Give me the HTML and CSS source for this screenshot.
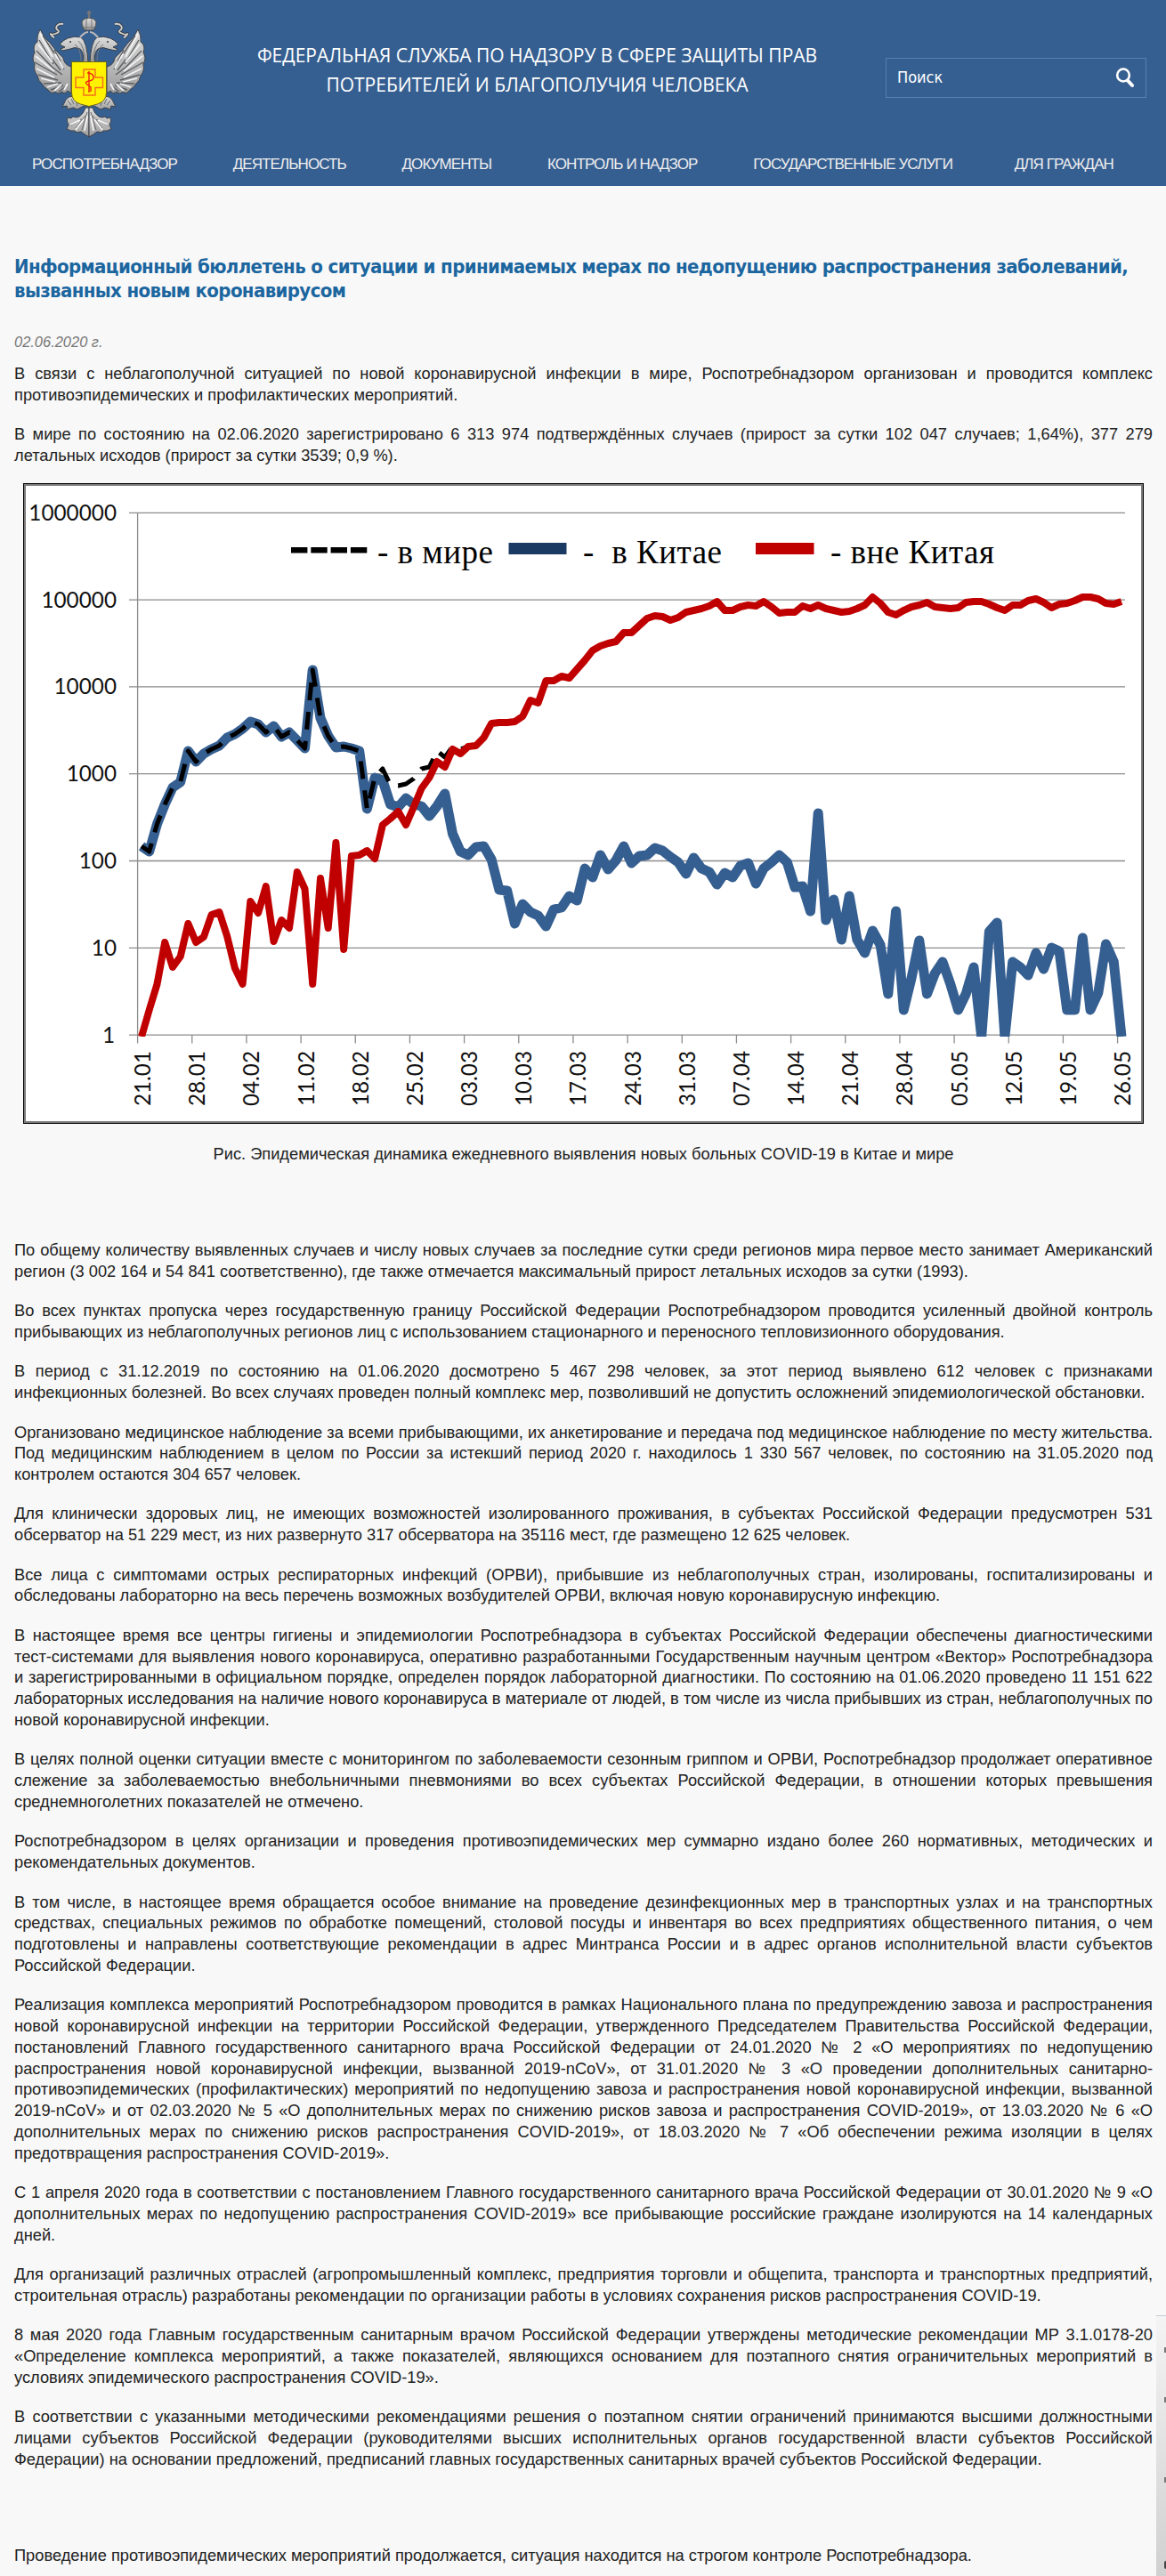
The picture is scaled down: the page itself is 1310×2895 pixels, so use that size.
FILE: index.html
```html
<!DOCTYPE html>
<html lang="ru">
<head>
  <meta charset="UTF-8">
  <meta name="viewport" content="width=device-width, initial-scale=1.0">
  <title>Информационный бюллетень</title>
  <link rel="stylesheet" href="styles.css">
</head>
<body>
  <header class="header">
    <div class="header-top">
      <a class="logo" href="#">
        <svg width="132" height="146" viewBox="34 10 132 146">
          <defs>
            <linearGradient id="silver" x1="0" y1="0" x2="0" y2="1">
              <stop offset="0" stop-color="#dedede"/>
              <stop offset="1" stop-color="#9c9c9c"/>
            </linearGradient>
            <!-- left half of the eagle, mirrored for the right one -->
            <g id="half" stroke="#3b3f45" stroke-width="1" stroke-linejoin="round">
              <path fill="none" stroke-width="3.6" d="M71 27q-5-1-7 2t1 5-3 4-5 0q2 4 4 4"/>
              <path fill="none" stroke="#d0d0d0" stroke-width="1.8" d="M71 27q-5-1-7 2t1 5-3 4-5 0q2 4 4 4"/>
              <path fill="url(#silver)" d="M45 33q-4 7-3 14-6 4-3 12-4 6 0 13-2 7 3 13 1 6 5 9 3 5 7 7 4 6 8 2 4 4 7 0 4 4 7-1l4 3V75q-8-2-9-10-9-8-15-17-7-6-11-15z"/>
              <g fill="none" stroke="#5d6064" stroke-width="1.4">
                <path d="M44 45l16 27M41 57l20 21M39 70l25 14M43 84l22 6M49 94l20-1M57 101l14-5M66 103l8-6M48 40l13 20M52 46l5 8M61 56l7 13M64 66l8 12M59 67l9 12M58 75l12 9"/>
              </g>
              <g fill="none" stroke="#f2f2f2" stroke-width="1.8">
                <path d="M45 38l14 26M43 50l16 20M40 63l21 17M41 77l20 10M46 88l16 4M53 98l12-4M61 102l8-7M72 101l4-7M62 61l9 16"/>
              </g>
              <path fill="url(#silver)" d="M93 70q2-10-3-15-6-3-11 0-4 1-9 2l-2-2 5-2-6-3q4-5 9-7 8-3 15-1 7 5 8 28z"/>
              <path fill="none" stroke="#777" d="M88 46q7 6 7 22M84 50q7 4 7 18"/>
              <circle cx="79" cy="47" r="1" fill="#333" stroke="none"/>
              <path fill="none" stroke="#b9b9b9" stroke-width="2" d="M99 36q-4 0-9 6"/>
              <path fill="url(#silver)" d="M83 108q-6 0-9 4l-4 8 5-1 1 4 6-2 5 2 5-3 5-2-3-6z"/>
              <path fill="none" stroke="#666" d="M76 113l4 5M80 111l3 6M85 111l2 8"/>
              <path fill="url(#silver)" d="M100 121h-4q-2 7-7 10-4 2-7 0l-2 2-4-1q-2 4 1 8l-2 5q5 3 9 2l2 2 5-1 4 3 5 3z"/>
              <path fill="none" stroke="#666" d="M98 126l-6 20M96 130l-11 14M92 134l-13 7"/>
              <path fill="none" stroke="#fafafa" stroke-width="1.5" d="M98 130l-3 17M94 134l-9 12M90 135l-11 5"/>
            </g>
          </defs>
          <use href="#half"/>
          <use href="#half" transform="matrix(-1 0 0 1 200 0)"/>
          <path fill="url(#silver)" stroke="#444" d="M92 24q3-4 8-4t8 4q1 4-3 10H95q-4-6-3-10z"/>
          <path fill="none" stroke="#777" d="M97 21v12M103 21v12M94 31h12"/>
          <path stroke="#777" stroke-width="2.2" d="M100 12v8M97.500 14.500h5"/>
          <path fill="#fff200" stroke="#6c6420" d="M80.500 69.500h39V104q0 10-10 13l-9.500 2.500-9.500-2.500q-10-3-10-13z"/>
          <path fill="none" stroke="#f3701c" stroke-width="1.400" d="M94 78h13v9h8.500v11.500H107V107H94v-8.500h-9V87h9z"/>
          <path fill="none" stroke="#ee2211" stroke-width="1.400" d="M100 80v24M98 82q6 0 7 4t-5 5-2 4 4 3 0 5"/>
        </svg>
      </a>
      <h2 class="site-name">Федеральная служба по надзору в сфере защиты прав<br>потребителей и благополучия человека</h2>
      <form class="search">
        <span class="search-label">Поиск</span>
        <svg class="search-icon" width="22" height="24" viewBox="0 0 22 24">
          <ellipse cx="9" cy="9.500" rx="6.800" ry="7" fill="none" stroke="#fff" stroke-width="2.600"/>
          <path d="M14 15.500l5 5.500" stroke="#fff" stroke-width="4" stroke-linecap="round"/>
        </svg>
      </form>
    </div>
    <nav class="menu">
      <a href="#">Роспотребнадзор</a>
      <a href="#">Деятельность</a>
      <a href="#">Документы</a>
      <a href="#">Контроль и надзор</a>
      <a href="#">Государственные услуги</a>
      <a href="#">Для граждан</a>
    </nav>
  </header>

  <main class="content">
    <h1>Информационный бюллетень о ситуации и принимаемых мерах по недопущению распространения заболеваний, вызванных новым коронавирусом</h1>
    <p class="date">02.06.2020 г.</p>
    <p>В связи с неблагополучной ситуацией по новой коронавирусной инфекции в мире, Роспотребнадзором организован и проводится комплекс противоэпидемических и профилактических мероприятий.</p>
    <p>В мире по состоянию на 02.06.2020 зарегистрировано 6 313 974 подтверждённых случаев (прирост за сутки 102 047 случаев; 1,64%), 377 279 летальных исходов (прирост за сутки 3539; 0,9 %).</p>

    <div class="chart">
      <svg id="chart" width="1259" height="720" viewBox="26 544 1259 720">
        <defs>
          <clipPath id="plot"><rect x="154" y="560" width="1112" height="606"/></clipPath>
        </defs>
        <rect x="26.500" y="544.500" width="1258" height="719" fill="#fff" stroke="#000"/>
        <rect x="28" y="546" width="1255" height="716" fill="none" stroke="#7c7a7b" stroke-width="2"/>
        <g id="grid" class="grid"></g>
        <g id="labels" class="labels"></g>
        <g clip-path="url(#plot)" class="lines">
          <polyline id="china" stroke="#365f91" stroke-width="11"/>
          <polyline id="world" stroke="#000" stroke-width="5" stroke-dasharray="20 13"/>
          <polyline id="outside" stroke="#c00000" stroke-width="8"/>
        </g>
        <g class="legend">
          <path d="M327 619.300h85.500" stroke="#000" stroke-width="6.500" stroke-dasharray="18.400 3.900"/>
          <text x="424" y="634" textLength="130">- в мире</text>
          <rect x="571.500" y="611" width="65" height="13" fill="#1b3a63"/>
          <text x="655" y="634" textLength="156">-&nbsp; в Китае</text>
          <rect x="849" y="611" width="65.500" height="13" fill="#c00000"/>
          <text x="933" y="634" textLength="184">- вне Китая</text>
        </g>
      </svg>
    </div>
    <p class="caption">Рис. Эпидемическая динамика ежедневного выявления новых больных COVID-19 в Китае и мире</p>

    <p class="spaced">По общему количеству выявленных случаев и числу новых случаев за последние сутки среди регионов мира первое место занимает Американский регион (3 002 164 и 54 841 соответственно), где также отмечается максимальный прирост летальных исходов за сутки (1993).</p>
    <p>Во всех пунктах пропуска через государственную границу Российской Федерации Роспотребнадзором проводится усиленный двойной контроль прибывающих из неблагополучных регионов лиц с использованием стационарного и переносного тепловизионного оборудования.</p>
    <p>В период с 31.12.2019 по состоянию на 01.06.2020 досмотрено 5 467 298 человек, за этот период выявлено 612 человек с признаками <span class="nowrap">инфекционных болезней.</span> Во всех случаях проведен полный комплекс мер, позволивший не допустить осложнений эпидемиологической обстановки.</p>
    <p>Организовано медицинское наблюдение за всеми прибывающими, их анкетирование и передача под медицинское наблюдение по месту жительства. Под медицинским наблюдением в целом по России за истекший период 2020 г. находилось 1 330 567 человек, по состоянию на 31.05.2020 под контролем остаются 304 657 человек.</p>
    <p>Для клинически здоровых лиц, не имеющих возможностей изолированного проживания, в субъектах Российской Федерации предусмотрен 531 обсерватор на 51 229 мест, из них развернуто 317 обсерватора на 35116 мест, где размещено 12 625 человек.</p>
    <p>Все лица с симптомами острых респираторных инфекций (ОРВИ), прибывшие из неблагополучных стран, изолированы, госпитализированы и обследованы лабораторно на весь перечень возможных возбудителей ОРВИ, включая новую коронавирусную инфекцию.</p>
    <p>В настоящее время все центры гигиены и эпидемиологии Роспотребнадзора в субъектах Российской Федерации обеспечены диагностическими <span class="nowrap">тест-системами</span> для выявления нового коронавируса, оперативно разработанными Государственным научным центром «Вектор» Роспотребнадзора и зарегистрированными в официальном порядке, определен порядок лабораторной диагностики. По состоянию на 01.06.2020 проведено 11 151 622 лабораторных исследования на наличие нового коронавируса в материале от людей, в том числе из числа прибывших из стран, неблагополучных по новой коронавирусной инфекции.</p>
    <p>В целях полной оценки ситуации вместе с мониторингом по заболеваемости сезонным гриппом и ОРВИ, Роспотребнадзор продолжает оперативное слежение за заболеваемостью внебольничными пневмониями во всех субъектах Российской Федерации, в отношении которых превышения среднемноголетних показателей не отмечено.</p>
    <p>Роспотребнадзором в целях организации и проведения противоэпидемических мер суммарно издано более 260 нормативных, методических и рекомендательных документов.</p>
    <p>В том числе, в настоящее время обращается особое внимание на проведение дезинфекционных мер в транспортных узлах и на транспортных средствах, специальных режимов по обработке помещений, столовой посуды и инвентаря во всех предприятиях общественного питания, о чем подготовлены и направлены соответствующие рекомендации в адрес Минтранса России и в адрес органов исполнительной власти субъектов Российской Федерации.</p>
    <p>Реализация комплекса мероприятий Роспотребнадзором проводится в рамках Национального плана по предупреждению завоза и распространения новой коронавирусной инфекции на территории Российской Федерации, утвержденного Председателем Правительства Российской Федерации, постановлений Главного государственного санитарного врача Российской Федерации от 24.01.2020 № 2 «О мероприятиях по недопущению распространения новой коронавирусной инфекции, вызванной 2019-nCoV», от 31.01.2020 № 3 «О проведении дополнительных санитарно-противоэпидемических (профилактических) мероприятий по недопущению завоза и распространения новой коронавирусной инфекции, вызванной 2019-nCoV» и от 02.03.2020 № 5 «О дополнительных мерах по снижению рисков завоза и распространения COVID-2019», от 13.03.2020 № 6 «О дополнительных мерах по снижению рисков распространения COVID-2019», от 18.03.2020 № 7 «Об обеспечении режима изоляции в целях предотвращения распространения COVID-2019».</p>
    <p>С 1 апреля 2020 года в соответствии с постановлением Главного государственного санитарного врача Российской Федерации от 30.01.2020 № 9 «О дополнительных мерах по недопущению распространения COVID-2019» все прибывающие российские граждане изолируются на 14 календарных дней.</p>
    <p>Для организаций различных отраслей (агропромышленный комплекс, предприятия торговли и общепита, транспорта и транспортных предприятий, строительная отрасль) разработаны рекомендации по организации работы в условиях сохранения рисков распространения COVID-19.</p>
    <p>8 мая 2020 года Главным государственным санитарным врачом Российской Федерации утверждены методические рекомендации МР 3.1.0178-20 «Определение комплекса мероприятий, а также показателей, являющихся основанием для поэтапного снятия ограничительных мероприятий в условиях эпидемического распространения COVID-19».</p>
    <p>В соответствии с указанными методическими рекомендациями решения о поэтапном снятии ограничений принимаются высшими должностными лицами субъектов Российской Федерации (руководителями высших исполнительных органов государственной власти субъектов Российской Федерации) на основании предложений, предписаний главных государственных санитарных врачей субъектов Российской Федерации.</p>
    <p class="spaced">Проведение противоэпидемических мероприятий продолжается, ситуация находится на строгом контроле Роспотребнадзора.</p>
  </main>

  <aside class="side-panel">
    <i></i>
    <i></i>
    <i></i>
    <i class="round"></i>
  </aside>

  <script src="chart.js"></script>
</body>
</html>
```

FILE: styles.css
```css
* {
  box-sizing: border-box;
}

body {
  position: relative;
  margin: 0;
  height: 2895px;
  overflow: hidden;
  background-color: #f8f8f8;
  color: #222;
  font-family: "Liberation Sans", Arial, sans-serif;
  font-size: 18.26px;
  line-height: 23.77px;
}

.header {
  height: 209px;
  background-color: #365f91;
  color: #fff;
}

.header-top {
  display: flex;
  height: 166px;
}

.logo {
  margin: 10px 0 0 34px;
  height: 146px;
}

.site-name {
  flex: 1;
  margin: 46px 0 0;
  padding-left: 46px;
  text-align: center;
  text-transform: uppercase;
  font: 21px/33px "Open Sans", "Noto Sans", sans-serif;
}

.search {
  display: flex;
  justify-content: space-between;
  width: 293px;
  height: 45px;
  margin: 65px 22px 0 0;
  padding: 0 12px;
  border: 1px solid #5580b5;
}

.search-label {
  font: 18px/41px "DejaVu Sans Condensed", "DejaVu Sans", sans-serif;
}

.search-icon {
  margin-top: 9px;
}

.menu {
  display: flex;
  justify-content: space-between;
  padding: 6px 59px 0 36px;
  font-size: 17px;
  line-height: 25px;
  letter-spacing: -0.9px;
}

.menu a {
  color: #eee;
  text-decoration: none;
  text-transform: uppercase;
}

.menu a:last-child {
  margin-left: 7px;
}

.content {
  padding: 77px 15px 0 16px;
}

h1 {
  margin: 0;
  color: #1c669f;
  font: bold 22px/27.3px "DejaVu Sans Condensed", "DejaVu Sans", sans-serif;
  letter-spacing: -0.62px;
}

p {
  margin: 0 0 20.7px;
  text-align: justify;
}

.date {
  margin: 32px 0 11.6px;
  color: #777;
  font-size: 16.46px;
  font-style: italic;
}

.nowrap {
  white-space: nowrap;
}

.chart {
  margin-top: -1px;
  padding-left: 10px;
  height: 720px;
}

.grid {
  stroke: #8c8c8c;
  stroke-width: 1.3;
}

.labels {
  font: 24.3px Lato, sans-serif;
  fill: #111;
  text-anchor: end;
}

.lines {
  fill: none;
  stroke-linejoin: round;
}

.legend text {
  font: 37px "Liberation Serif", "Times New Roman", serif;
}

.caption {
  margin-top: 21.7px;
  text-align: center;
}

.spaced {
  margin-top: 84px;
}

.side-panel {
  position: absolute;
  top: 2602px;
  right: 0;
  display: grid;
  grid-template-rows: 76px 36px 144px 46px;
  align-items: center;
  justify-items: end;
  width: 11px;
  height: 293px;
  overflow: hidden;
  border-top: 1px solid #c5ccd6;
  background: linear-gradient(#f4f4f4, #d0d0d0);
}

.side-panel i {
  width: 2px;
  height: 6px;
  background-color: #777;
}

.side-panel .round {
  height: 9px;
  border-radius: 2px 0 0 2px;
  background-color: #444;
}
```

FILE: chart.js
```js
const NS = 'http://www.w3.org/2000/svg';
const DAY = 8.738;

// vertical position of every day on the log axis
const china = [952, 958, 927, 905, 886, 880, 845, 857, 848, 843, 839, 830, 826, 820, 812, 815, 824, 817, 829, 824, 833,
  842, 754, 808, 828, 841, 840, 842, 845, 910, 875, 878, 905, 908, 898, 905, 907, 918, 907, 893, 938, 958, 962, 953,
  952, 967, 1001, 1002, 1039, 1017, 1026, 1030, 1042, 1023, 1021, 1008, 1013, 977, 987, 962, 978, 968, 952, 971, 963,
  962, 954, 957, 964, 970, 983, 965, 977, 981, 995, 982, 987, 974, 971, 994, 977, 970, 962, 970, 998, 997, 1025, 915,
  1035, 1012, 1057, 1008, 1057, 1072, 1047, 1063, 1118, 1025, 1136, 1100, 1058, 1118, 1095, 1082, 1107, 1136, 1118,
  1088, 1166, 1048, 1038, 1166, 1082, 1088, 1097, 1072, 1090, 1066, 1070, 1136, 1136, 1055, 1136, 1117, 1062, 1082, 1166];

const world = china.slice(0, 31).concat([865, 883, 884, 882, 876, 865, 863, 845, 852, 840, 843, 840]);

const outside = [1166, 1136, 1107, 1060, 1088, 1076, 1039, 1060, 1054, 1029, 1026, 1053, 1089, 1107, 1014, 1027, 997,
  1059, 1035, 1044, 981, 1000, 1107, 988, 1044, 948, 1068, 963, 962, 957, 966, 928, 921, 913, 928, 908, 887, 875, 857,
  863, 843, 848, 840, 839, 830, 814, 813, 813, 812, 806, 788, 791, 766, 766, 761, 763, 753, 743, 732, 727, 724, 722,
  712, 712, 704, 696, 693, 694, 698, 695, 689, 687, 685, 682, 677, 687, 687, 683, 681, 682, 677, 683, 690, 689, 689,
  682, 685, 681, 685, 687, 689, 688, 685, 681, 672, 679, 689, 692, 687, 683, 681, 678, 683, 684, 685, 684, 678, 677,
  677, 680, 684, 687, 681, 681, 676, 674, 678, 684, 680, 679, 676, 672, 672, 674, 679, 680, 677];

const dates = ['21.01', '28.01', '04.02', '11.02', '18.02', '25.02', '03.03', '10.03', '17.03', '24.03', '31.03',
  '07.04', '14.04', '21.04', '28.04', '05.05', '12.05', '19.05', '26.05'];

function add(parent, tag, attrs, text) {
  const el = document.createElementNS(NS, tag);
  for (const key in attrs) el.setAttribute(key, attrs[key]);
  if (text) el.textContent = text;
  document.getElementById(parent).appendChild(el);
}

function draw(id, values) {
  const points = values.map((y, i) => (159 + i * DAY).toFixed(1) + ',' + y).join(' ');
  document.getElementById(id).setAttribute('points', points);
}

for (let i = 0; i <= 6; i++) {
  const y = 577.3 + i * 97.8;
  add('grid', 'line', { x1: 145, y1: y, x2: 1264, y2: y });
  add('labels', 'text', { x: 131 - (i === 6 ? 2 : 0), y: y + 8.5 }, String(10 ** (6 - i)));
}
add('grid', 'line', { x1: 154.6, y1: 577, x2: 154.6, y2: 1164 });

dates.forEach((date, i) => {
  const x = 154.6 + i * DAY * 7;
  add('grid', 'line', { x1: x, y1: 1164, x2: x, y2: 1173.5 });
  add('labels', 'text', { transform: `translate(${x + 14.5} 1182) rotate(-90)` }, date);
});

draw('china', china);
draw('world', world);
draw('outside', outside);
```
